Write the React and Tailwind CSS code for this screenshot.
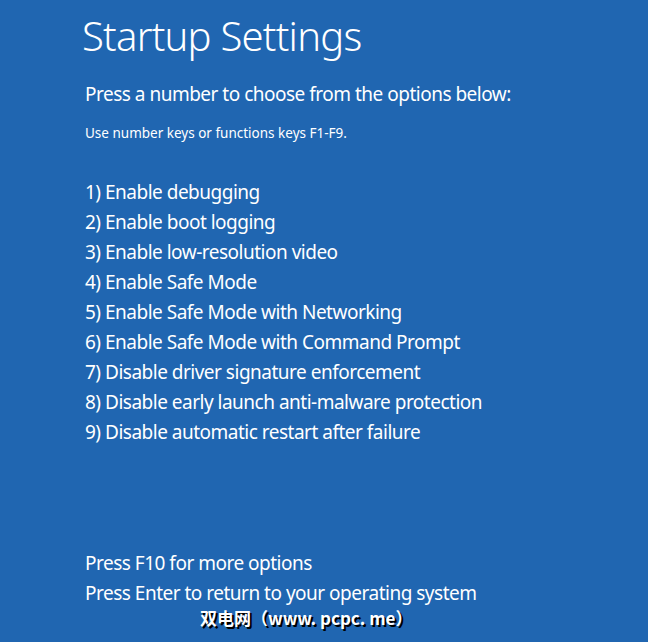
import React from "react";

const options = [
    "1) Enable debugging",
    "2) Enable boot logging",
    "3) Enable low-resolution video",
    "4) Enable Safe Mode",
    "5) Enable Safe Mode with Networking",
    "6) Enable Safe Mode with Command Prompt",
    "7) Disable driver signature enforcement",
    "8) Disable early launch anti-malware protection",
    "9) Disable automatic restart after failure",
];

export default function App() {
    return (
        <div className="w-[648px] h-[642px] bg-[#2066b1] text-white overflow-hidden font-['Noto_Sans',sans-serif] flex flex-col">
            <div className="pl-[82px] pt-[10px]">
                <h1 className="text-[40px] leading-[52px] font-light tracking-[-0.75px]">Startup Settings</h1>
            </div>
            <div className="pl-[85px] flex flex-col tracking-[-0.5px]">
                <p className="mt-[18px] text-[19px] leading-[28px]">
                    Press a number to choose from the options below:
                </p>
                <p className="mt-[16px] text-[13.5px] leading-[18px] tracking-normal">
                    Use number keys or functions keys F1-F9.
                </p>
                <ul className="mt-[35px] flex flex-col">
                    {options.map((o) => (
                        <li key={o} className="text-[19px] leading-[30px]">
                            {o}
                        </li>
                    ))}
                </ul>
                <div className="mt-[101px] flex flex-col text-[19px] leading-[30px]">
                    <p>Press F10 for more options</p>
                    <p>Press Enter to return to your operating system</p>
                </div>
            </div>
            <div className="pl-[200px] pt-[1px] text-[17px] leading-[18px] font-bold font-['Noto_Sans_CJK_SC',sans-serif] [text-shadow:2px_2px_0_#000]">
                双电网（www. pcpc. me）
            </div>
        </div>
    );
}
